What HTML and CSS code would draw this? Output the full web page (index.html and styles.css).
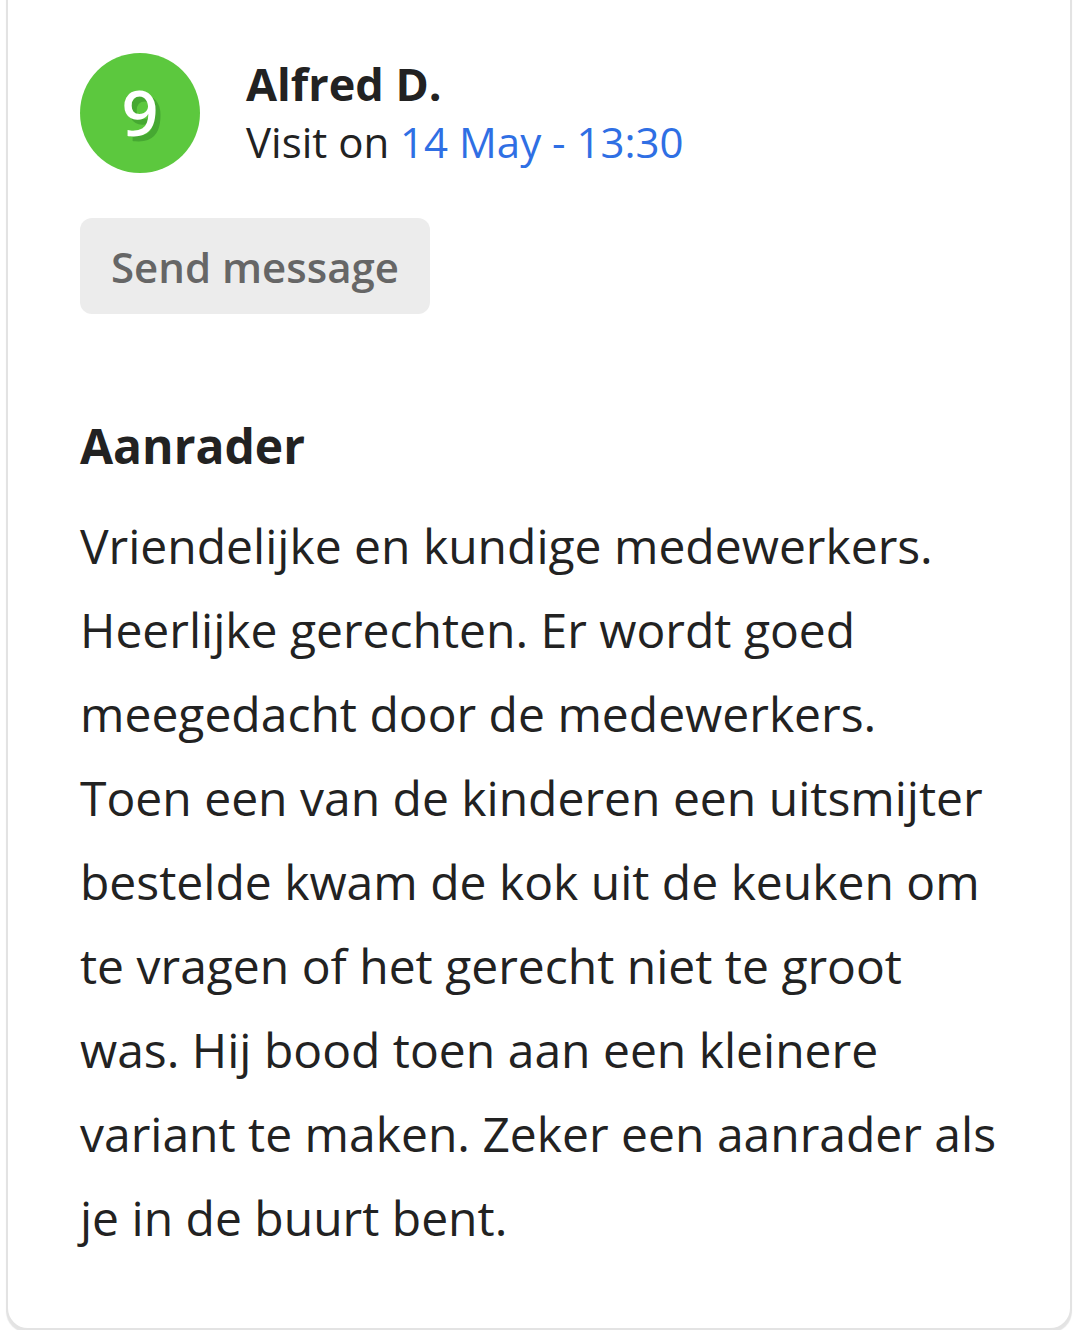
FILE: index.html
```html
<!DOCTYPE html>
<html lang="en">

<head>
    <meta charset="UTF-8">
    <meta name="viewport" content="width=device-width, initial-scale=1.0">
    <title>Review - Alfred D.</title>
    <link rel="stylesheet" href="styles.css">
</head>

<body>

    <div class="review-card">
        <div class="review-head">
            <div class="score-badge"><span>9</span></div>
            <div class="reviewer">
                <div class="reviewer-name">Alfred D.</div>
                <div class="visit-date">Visit on <span class="visit-link">14 May - 13:30</span></div>
            </div>
        </div>

        <button class="send-message">Send message</button>

        <h3 class="review-title">Aanrader</h3>
        <p class="review-text">Vriendelijke en kundige medewerkers. Heerlijke gerechten. Er wordt goed meegedacht door de medewerkers. Toen een van de kinderen een uitsmijter bestelde kwam de kok uit de keuken om te vragen of het gerecht niet te groot was. Hij bood toen aan een kleinere variant te maken. Zeker een aanrader als je in de buurt bent.</p>
    </div>

</body>

</html>
```

FILE: styles.css
```css
body {
    margin: 0;
    background-color: #ffffff;
    font-family: 'Open Sans', sans-serif;
    color: #222222;
}

.review-card {
    margin: -22px 20px 0 6px;
    height: 1352px;
    box-sizing: border-box;
    border: 2px solid #e3e3e3;
    border-radius: 22px;
    padding: 73px 72px 0 72px;
    box-shadow: 0 3px 1px #e4e4e4;
    background-color: #ffffff;
}

.review-head {
    display: flex;
    align-items: center;
    gap: 46px;
}

.score-badge {
    width: 120px;
    height: 120px;
    border-radius: 50%;
    background-color: #5cc83e;
    display: flex;
    align-items: center;
    justify-content: center;
    flex-shrink: 0;
}

.score-badge span {
    color: #ffffff;
    font-size: 64px;
    font-weight: 600;
    text-shadow: 5px 5px 0 #46a832;
    margin-top: -4px;
}

.reviewer-name {
    font-size: 45px;
    font-weight: 700;
    line-height: 58px;
}

.visit-date {
    font-size: 42px;
    line-height: 58px;
}

.visit-link {
    color: #2f6fe4;
}

.send-message {
    margin-top: 45px;
    background-color: #ececec;
    border: none;
    border-radius: 12px;
    height: 96px;
    padding: 0 31px;
    font-family: 'Open Sans', sans-serif;
    font-size: 42px;
    font-weight: 600;
    color: #666666;
}

.review-title {
    margin: 102px 0 0 0;
    font-size: 48px;
    font-weight: 700;
    line-height: 60px;
}

.review-text {
    margin: 28px 0 0 0;
    font-size: 48px;
    line-height: 84px;
}
```
